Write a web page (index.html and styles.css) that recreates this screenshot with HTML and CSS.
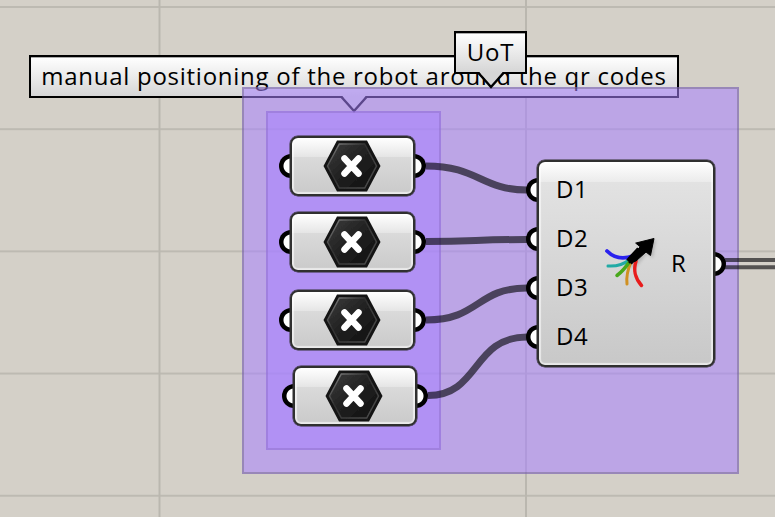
FILE: index.html
```html
<!DOCTYPE html>
<html lang="en">
<head>
<meta charset="utf-8">
<title>Robot positioning definition</title>
<link rel="stylesheet" href="styles.css">
</head>
<body>
<svg class="defs" width="0" height="0" aria-hidden="true">
  <defs>
    <linearGradient id="hexFace" x1="0" y1="0" x2="1" y2="1">
      <stop offset="0" stop-color="#3c3c3c"/><stop offset=".5" stop-color="#202020"/><stop offset="1" stop-color="#101010"/>
    </linearGradient>
    <linearGradient id="hexEdge" x1="0" y1="0" x2="1" y2="1">
      <stop offset="0" stop-color="#8a8a8a"/><stop offset=".4" stop-color="#303030"/><stop offset="1" stop-color="#505050"/>
    </linearGradient>
    <filter id="soft" x="-20%" y="-20%" width="140%" height="140%"><feGaussianBlur stdDeviation=".6"/></filter>
    <filter id="shade" x="-20%" y="-20%" width="150%" height="150%"><feGaussianBlur stdDeviation="1.6"/></filter>
    <symbol id="hex" viewBox="0 0 58 52">
      <path d="M.5 26 14 .5H44L57.500 26 44 51.500H14Z" fill="#141414"/>
      <path d="M4.500 26 16.300 4H41.700L53.500 26 41.700 48H16.300Z" fill="url(#hexFace)" stroke="url(#hexEdge)" stroke-width="1.500" filter="url(#soft)"/>
      <path d="M21.500 18.500 35.500 33.500M35.500 18.500 21.500 33.500" stroke="#fff" stroke-width="6.500" stroke-linecap="round"/>
    </symbol>
  </defs>
</svg>
<main class="canvas">
  <div class="label label-inner">manual positioning of the robot around the qr codes</div>
  <svg class="tip tip-inner" viewBox="0 0 28 18"><path d="M2 0H26L14 14Z" fill="#d6d6d6"/><path d="M1 .5 14 15 27 .5" fill="none" stroke="#000" stroke-width="2.400"/></svg>
  <div class="group group-outer"></div>
  <div class="group group-inner"></div>
  <div class="label label-outer">UoT</div>
  <svg class="tip tip-outer" viewBox="0 0 28 18"><path d="M2 0H26L14 14Z" fill="#d6d6d6"/><path d="M1 .5 14 15 27 .5" fill="none" stroke="#000" stroke-width="2.400"/></svg>

  <svg class="wires" viewBox="0 0 775 517">
    <path d="M426 166C478 166 481 190 527 190"/>
    <path d="M426 241.500C476 241.500 476 239.500 527 239.500"/>
    <path d="M426 320C480 320 476 288 527 288"/>
    <path d="M428 395.500C480 395.500 472 337 527 337"/>
    <path class="double" d="M725 260H775M725 267.200H775"/>
  </svg>

  <div class="node param p1"><i class="port in"></i><i class="port out"></i><div class="face"><svg class="hex"><use href="#hex"/></svg></div></div>
  <div class="node param p2"><i class="port in"></i><i class="port out"></i><div class="face"><svg class="hex"><use href="#hex"/></svg></div></div>
  <div class="node param p3"><i class="port in"></i><i class="port out"></i><div class="face"><svg class="hex"><use href="#hex"/></svg></div></div>
  <div class="node param p4"><i class="port in"></i><i class="port out"></i><div class="face"><svg class="hex"><use href="#hex"/></svg></div></div>

  <div class="node merge">
    <i class="port in d1"></i><i class="port in d2"></i><i class="port in d3"></i><i class="port in d4"></i>
    <i class="port out"></i>
    <div class="face">
      <div class="inputs"><span>D1</span><span>D2</span><span>D3</span><span>D4</span></div>
      <svg class="arrow" viewBox="0 0 80 80">
        <path d="M38 47 53 32 47 24 66 20 63 38 57 34 46 47Z" fill="#888" opacity=".4" filter="url(#shade)"/>
        <g fill="none" stroke-width="3" stroke-linecap="round" filter="url(#soft)">
          <path d="M17 31C23 37 32 40 43 36" stroke="#2a20ee" stroke-width="3.800"/>
          <path d="M18 46C26 46.500 33 45 39 40" stroke="#20aaa5"/>
          <path d="M37 64C36 56 38 49 41 42" stroke="#d09020"/>
          <path d="M51.500 65.500C45 58 43 51 46 41" stroke="#e81c1c" stroke-width="3.500"/>
          <path d="M27 55.500C33 51 36 47 40 41" stroke="#48a81c" stroke-width="3.500"/>
          <path d="M39 42 50 30" stroke="#000" stroke-width="7.500" stroke-linecap="butt"/>
          <path d="M46 23 64 18.500 60.500 35.500 56 32 46 41 39 43 40 38 50 27Z" fill="#000" stroke="#000" stroke-width="1" stroke-linejoin="round"/>
        </g>
      </svg>
      <span class="result">R</span>
    </div>
  </div>
</main>
</body>
</html>
```

FILE: styles.css
```css
* { box-sizing: border-box; }
body { margin: 0; }
.defs { position: absolute; }

.canvas {
  position: relative;
  width: 775px;
  height: 517px;
  overflow: hidden;
  font: 24px "Open Sans", "Noto Sans", sans-serif;
  color: #000;
  background-color: #d4d0c8;
  background-image:
    linear-gradient(90deg, #bab7af 2px, transparent 2px),
    linear-gradient(#bdbab2 2px, transparent 2px);
  background-size: 366.5px 100%, 100% 122.2px;
  background-position: 158.500px 0, 0 6px;
}

/* group captions */
.label {
  position: absolute;
  display: flex;
  align-items: center;
  justify-content: center;
  padding-bottom: 2px;
  border: 2px solid #000;
  background: linear-gradient(#fff, #d6d6d6);
  box-shadow: inset 0 1px #aaa;
  letter-spacing: .73px;
  white-space: nowrap;
}
.label-inner { left: 29px; top: 55px; width: 650px; height: 43px; }
.label-outer { left: 454px; top: 31px; width: 73px; height: 43px; }
.tip { position: absolute; width: 28px; height: 18px; }
.tip-inner { left: 340px; top: 96px; }
.tip-outer { left: 477px; top: 72px; }

/* translucent groups */
.group {
  position: absolute;
  background: rgba(167, 130, 255, .55);
  border: 2px solid rgba(70, 65, 80, .3);
}
.group-outer { left: 242px; top: 87px; width: 497px; height: 387px; }
.group-inner { left: 266px; top: 111px; width: 175px; height: 339px; border-color: rgba(110, 80, 160, .25); }

.wires { position: absolute; inset: 0; width: 775px; height: 517px; }
.wires path { fill: none; stroke: rgba(5, 5, 8, .62); stroke-width: 7; }
.wires .double { stroke-width: 4; }

/* components */
.node { position: absolute; isolation: isolate; }
.face {
  display: flex;
  align-items: center;
  width: 100%;
  height: 100%;
  border: 2px solid #303030;
  border-radius: 8px;
  box-shadow: 0 0 0 .5px #303030, inset 0 0 1px 2px rgba(255, 255, 255, .6);
}
.param { width: 125px; height: 60px; }
.param .face {
  justify-content: center;
  background: linear-gradient(#fff, #e6e6e6 33%, #dadada 34%, #cacaca);
}
.hex { width: 58px; height: 52px; margin-right: 2px; }
.p1 { left: 290px; top: 136px; }
.p2 { left: 290px; top: 212px; }
.p3 { left: 290px; top: 290px; }
.p4 { left: 293px; top: 366px; width: 124px; }

.port {
  position: absolute;
  z-index: -1;
  top: 50%;
  width: 24px;
  height: 24px;
  margin-top: -12px;
  border-radius: 50%;
  background: radial-gradient(circle, #fff 7px, #000 8px);
}
.in { left: -11px; }
.out { right: -11px; }

.merge { left: 537px; top: 160px; width: 178px; height: 207px; }
.merge .face {
  padding-left: 17px;
  background: linear-gradient(#fff, #ebebeb 9.800%, #e2e2e2 10%, #c8c8c8);
}
.merge .d1 { top: 30px; }
.merge .d2 { top: 79px; }
.merge .d3 { top: 128px; }
.merge .d4 { top: 177px; }
.inputs { display: flex; flex-direction: column; width: 34px; margin-top: -3px; }
.inputs span { height: 49px; line-height: 49px; letter-spacing: .5px; }
.arrow { flex: none; width: 80px; height: 80px; margin-top: -7px; }
.result { margin: -3px 0 0 1px; }
```
